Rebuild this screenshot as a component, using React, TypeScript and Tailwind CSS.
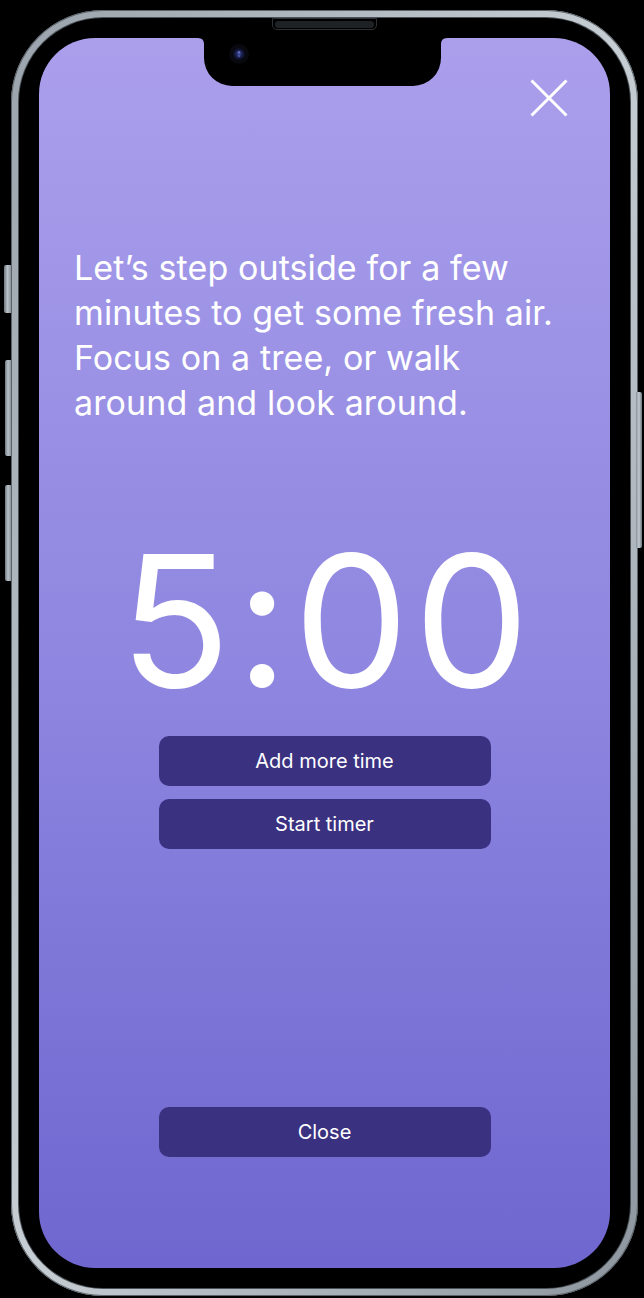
import React from "react";

function Notch() {
  return (
    <svg width="249" height="49" viewBox="0 0 249 49" className="block">
      <path
        d="M0 0 Q6 0 6 6 V20 A28 28 0 0 0 34 48 H215 A28 28 0 0 0 243 20 V6 Q243 0 249 0 Z"
        fill="#000"
      />
      <defs>
        <radialGradient id="cam" cx="50%" cy="50%" r="50%">
          <stop offset="0%" stopColor="#3a4a9a" />
          <stop offset="45%" stopColor="#1c2356" />
          <stop offset="100%" stopColor="#05060d" />
        </radialGradient>
      </defs>
      <circle cx="41" cy="16" r="10" fill="#08080f" />
      <circle cx="41" cy="16" r="6.5" fill="url(#cam)" />
      <circle cx="41" cy="14.3" r="1.4" fill="#6c78c8" opacity="0.8" />
      <circle cx="41" cy="18" r="1.2" fill="#5563b0" opacity="0.7" />
    </svg>
  );
}

function CloseIcon() {
  return (
    <svg width="38" height="38" viewBox="0 0 38 38" className="block">
      <path d="M1.5 1.5 L36.5 36.5 M36.5 1.5 L1.5 36.5" stroke="#fff" strokeWidth="3" strokeLinecap="butt" />
    </svg>
  );
}

export default function App() {
  const font = { fontFamily: '"Inter", "Liberation Sans", sans-serif' };
  return (
    <div className="relative w-[644px] h-[1298px] bg-black overflow-hidden" style={font}>
      {/* side buttons */}
      <div className="absolute left-[4px] top-[265px] w-[7px] h-[48px] rounded-l-[2px] bg-gradient-to-r from-[#6f7880] via-[#b9c1c8] to-[#8a939b]" />
      <div className="absolute left-[5px] top-[360px] w-[6px] h-[96px] rounded-l-[2px] bg-gradient-to-r from-[#6f7880] via-[#b9c1c8] to-[#8a939b]" />
      <div className="absolute left-[5px] top-[485px] w-[6px] h-[96px] rounded-l-[2px] bg-gradient-to-r from-[#6f7880] via-[#b9c1c8] to-[#8a939b]" />
      <div className="absolute left-[636px] top-[392px] w-[6px] h-[156px] rounded-r-[2px] bg-gradient-to-r from-[#8a939b] via-[#c3cad0] to-[#6f7880]" />

      {/* phone body */}
      <div className="ml-[11px] mt-[10px] w-[627px] h-[1286px] rounded-[92px] p-[8px] bg-gradient-to-br from-[#9aa3ab] via-[#c7ced4] to-[#8d969e] shadow-[inset_0_0_0_1px_#5b636a]">
        <div className="w-full h-full rounded-[84px] bg-black p-[20px] shadow-[0_0_0_1px_#4a5157]">
          <div className="relative w-full h-full rounded-[56px] overflow-hidden bg-gradient-to-b from-[#ab9fec] via-[#8f87e0] to-[#6f66cf] flex flex-col items-center">
            {/* notch */}
            <div className="absolute top-0 left-[159px]">
              <Notch />
            </div>
            {/* close X */}
            <div className="self-end mt-[41px] mr-[42px]">
              <CloseIcon />
            </div>
            {/* text */}
            <p className="self-start ml-[35px] mr-[20px] mt-[128px] text-white text-[34px] leading-[45px] font-normal tracking-[0.1px]">
              Let’s step outside for a few
              <br />
              minutes to get some fresh air.
              <br />
              Focus on a tree, or walk
              <br />
              around and look around.
            </p>
            {/* timer */}
            <div className="mt-[104px] text-white text-[183px] leading-[183px] font-normal tracking-[5px] pl-[5px]">
              5:00
            </div>
            {/* buttons */}
            <button className="mt-[24px] w-[332px] h-[50px] rounded-[10px] bg-[#3a3181] text-white text-[20px]">
              Add more time
            </button>
            <button className="mt-[13px] w-[332px] h-[50px] rounded-[10px] bg-[#3a3181] text-white text-[20px]">
              Start timer
            </button>
            <div className="flex-1" />
            <button className="mb-[111px] w-[332px] h-[50px] rounded-[10px] bg-[#3a3181] text-white text-[20px]">
              Close
            </button>
          </div>
        </div>
      </div>

      {/* speaker */}
      <div className="absolute left-[272px] top-[18px] w-[105px] h-[12px] rounded-b-[5px] border border-[#2e3236] bg-black flex items-center justify-center">
        <div className="w-[99px] h-[7px] rounded-full bg-[#1f2225]" />
      </div>
    </div>
  );
}
